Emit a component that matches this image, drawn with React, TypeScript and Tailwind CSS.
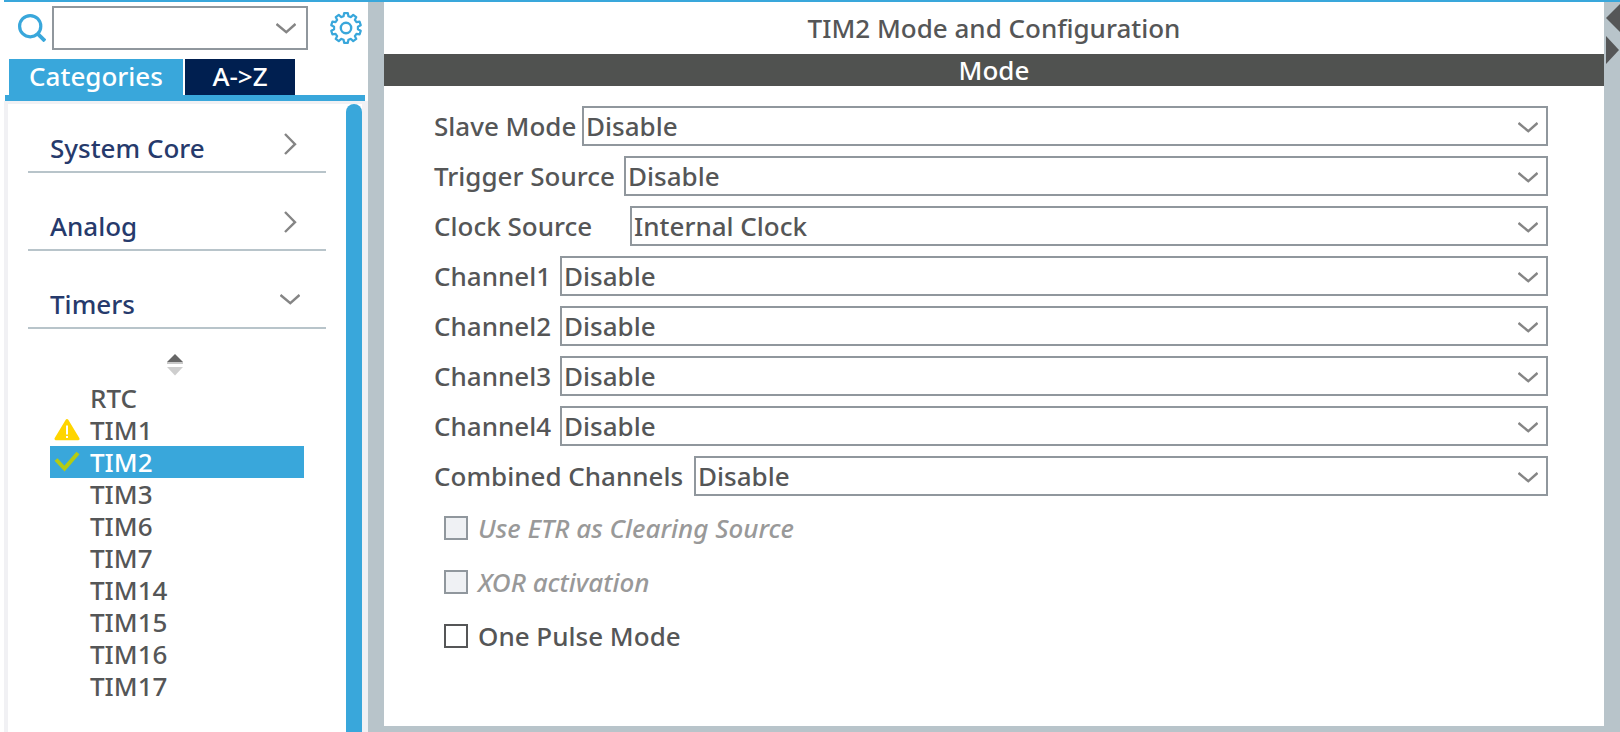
import { useState } from "react";

type ModeField = { id: string; label: string; value: string; labelWidth: string };

const MODE_FIELDS: ModeField[] = [
  { id: "slave-mode", label: "Slave Mode", value: "Disable", labelWidth: "w-[148px]" },
  { id: "trigger-source", label: "Trigger Source", value: "Disable", labelWidth: "w-[190px]" },
  { id: "clock-source", label: "Clock Source", value: "Internal Clock", labelWidth: "w-[196px]" },
  { id: "channel1", label: "Channel1", value: "Disable", labelWidth: "w-[126px]" },
  { id: "channel2", label: "Channel2", value: "Disable", labelWidth: "w-[126px]" },
  { id: "channel3", label: "Channel3", value: "Disable", labelWidth: "w-[126px]" },
  { id: "channel4", label: "Channel4", value: "Disable", labelWidth: "w-[126px]" },
  { id: "combined-channels", label: "Combined Channels", value: "Disable", labelWidth: "w-[260px]" },
];

const MODE_FLAGS = [
  { id: "etr", label: "Use ETR as Clearing Source", disabled: true },
  { id: "xor", label: "XOR activation", disabled: true },
  { id: "one-pulse", label: "One Pulse Mode", disabled: false },
];

const TIMERS = ["RTC", "TIM1", "TIM2", "TIM3", "TIM6", "TIM7", "TIM14", "TIM15", "TIM16", "TIM17"];

function ChevronDown({ className = "" }: { className?: string }) {
  return (
    <svg className={className} width="20" height="11" viewBox="0 0 20 11" fill="none" stroke="#858585" strokeWidth="2.4" aria-hidden="true">
      <path d="M0.5 1 L10.3 9.2 L19.5 1" />
    </svg>
  );
}

function ChevronRight({ className = "" }: { className?: string }) {
  return (
    <svg className={className} width="13" height="22" viewBox="0 0 13 22" fill="none" stroke="#858585" strokeWidth="2.4" aria-hidden="true">
      <path d="M1 1 L11 11.2 L1 21" />
    </svg>
  );
}

function SearchIcon() {
  return (
    <svg width="28" height="28" viewBox="0 0 28 28" fill="none" stroke="#39a7db" aria-hidden="true">
      <circle cx="12.2" cy="12.2" r="10.6" strokeWidth="3.2" />
      <path d="M19.5 19.7 L27 27" strokeWidth="3.8" />
    </svg>
  );
}

const GEAR_TEETH = 10;

const GEAR_OUTLINE =
  Array.from({ length: GEAR_TEETH }, (_, i) => {
    const step = (2 * Math.PI) / GEAR_TEETH;
    const corner = (radius: number, offset: number) => {
      const angle = (i + offset) * step - Math.PI / 2;
      return `${(16 + radius * Math.cos(angle)).toFixed(2)} ${(16 + radius * Math.sin(angle)).toFixed(2)}`;
    };
    return `${i === 0 ? "M" : "L"}${corner(12, -0.32)} L${corner(15, -0.2)} L${corner(15, 0.2)} L${corner(12, 0.32)}`;
  }).join(" ") + " Z";

function GearIcon() {
  return (
    <svg width="32" height="32" viewBox="0 0 32 32" fill="none" stroke="#39a7db" aria-hidden="true">
      <path d={GEAR_OUTLINE} strokeWidth="2.2" strokeLinejoin="round" />
      <circle cx="16" cy="16" r="5.2" strokeWidth="2.4" />
    </svg>
  );
}

function WarningIcon() {
  return (
    <svg width="26" height="24" viewBox="0 0 26 24" aria-hidden="true">
      <path d="M13 2.5 L24 20.8 H2 Z" fill="#ffd500" stroke="#ffd500" strokeWidth="3" strokeLinejoin="round" />
      <path d="M13 7.5 V16.5 M13 18 V20" stroke="#fff" strokeWidth="2" />
    </svg>
  );
}

function CheckIcon() {
  return (
    <svg width="26" height="24" viewBox="0 0 26 24" fill="none" aria-hidden="true">
      <path d="M2 9.5 L10.5 18.5 L24 3" stroke="#b4cb12" strokeWidth="4" />
    </svg>
  );
}

function Category({ name, open = false }: { name: string; open?: boolean }) {
  return (
    <button
      type="button"
      aria-expanded={open}
      className="mb-[30px] flex h-12 w-full items-end justify-between border-b-2 border-[#b8c4ca] pb-[5px] pl-[22px] text-left leading-9 text-[#263a6c]"
    >
      <span>{name}</span>
      <span className="mr-5 flex h-[41px] w-8 items-center justify-center pb-1">
        {open ? <ChevronDown /> : <ChevronRight />}
      </span>
    </button>
  );
}

function Sidebar() {
  const [selected, setSelected] = useState("TIM2");
  return (
    <aside className="flex w-[364px] shrink-0 flex-col">
      <div className="flex items-center pt-1 pl-[14px]">
        <SearchIcon />
        <div className="relative ml-[6px] w-64">
          <input aria-label="Search peripherals" className="block h-11 w-full border-2 border-[#90979d] bg-white pr-10 pl-1 outline-none" />
          <ChevronDown className="pointer-events-none absolute top-[17px] right-3" />
        </div>
        <button type="button" aria-label="Settings" className="ml-[22px]">
          <GearIcon />
        </button>
      </div>
      <div role="tablist" className="mt-[9px] flex gap-[2px] pl-[5px] leading-[34px] text-white">
        <button type="button" role="tab" aria-selected="true" className="h-9 w-[174px] bg-[#39a7db] pb-[2px]">
          Categories
        </button>
        <button type="button" role="tab" aria-selected="false" className="h-9 w-[110px] bg-[#001f50] pb-[2px]">
          A-&gt;Z
        </button>
      </div>
      <div className="mr-[3px] ml-px h-[6px] bg-[#39a7db]" />
      <div className="flex flex-1 border-t-[3px] border-r-[6px] border-l-4 border-[#f1f1f4]">
        <div className="flex-1 pt-[21px] pr-5 pl-5">
          <Category name="System Core" />
          <Category name="Analog" />
          <Category name="Timers" open />
          <div className="-mt-[5px] flex h-7 flex-col items-center pr-1">
            <button type="button" aria-label="Sort timers">
              <svg width="18" height="22" viewBox="0 0 18 22" aria-hidden="true">
                <path d="M9 0 L17 8 H1 Z" fill="#666" />
                <path d="M1 8 H17 V10 H1 Z" fill="#c8c8c8" />
                <path d="M1 13 H17 L9 21.5 Z" fill="#cecece" />
              </svg>
            </button>
          </div>
          <ul className="mr-[22px] ml-[22px]">
            {TIMERS.map((name) => (
              <li key={name}>
                <button
                  type="button"
                  onClick={() => setSelected(name)}
                  className={
                    name === selected
                      ? "flex h-8 w-full items-center bg-[#39a7db] pl-1 text-left leading-8 text-white"
                      : "flex h-8 w-full items-center pl-1 text-left leading-8"
                  }
                >
                  <span className="w-9">
                    {name === "TIM1" && <WarningIcon />}
                    {name === "TIM2" && <CheckIcon />}
                  </span>
                  {name}
                </button>
              </li>
            ))}
          </ul>
        </div>
        <div className="w-4 rounded-t-full bg-[#39a7db]" />
      </div>
    </aside>
  );
}

function ModePanel() {
  return (
    <main className="mb-[6px] min-w-0 flex-1 bg-white">
      <h1 className="h-[52px] text-center leading-[52px]">TIM2 Mode and Configuration</h1>
      <h2 className="h-8 bg-[#505250] text-center leading-8 text-white">Mode</h2>
      <form className="pt-5 pr-14 pl-[50px]">
        <div className="flex flex-col gap-[10px]">
          {MODE_FIELDS.map((field) => (
            <div key={field.id} className="flex h-10 items-center">
              <label htmlFor={field.id} className={`shrink-0 whitespace-nowrap ${field.labelWidth}`}>
                {field.label}
              </label>
              <div className="relative flex-1">
                <select
                  id={field.id}
                  defaultValue={field.value}
                  className="block h-10 w-full appearance-none border-2 border-[#90979d] bg-white pr-10 pl-[2px] leading-9 outline-none"
                >
                  <option>{field.value}</option>
                </select>
                <ChevronDown className="pointer-events-none absolute top-4 right-[10px]" />
              </div>
            </div>
          ))}
        </div>
        <div className="mt-3 flex flex-col gap-[14px] pl-[10px]">
          {MODE_FLAGS.map((flag) => (
            <div key={flag.id} className="flex h-10 items-center gap-[10px]">
              <input
                id={flag.id}
                type="checkbox"
                disabled={flag.disabled}
                className="size-6 appearance-none border-2 border-[#555657] bg-white checked:bg-[#39a7db] disabled:border-[#90979d] disabled:bg-[#eff1f4]"
              />
              <label htmlFor={flag.id} className={flag.disabled ? "text-[#999] italic" : ""}>
                {flag.label}
              </label>
            </div>
          ))}
        </div>
      </form>
    </main>
  );
}

export default function App() {
  return (
    <div className="flex min-h-screen bg-white pl-1 font-['Noto_Sans',sans-serif] text-[26px] leading-9 font-medium text-[#555657]">
      <div className="flex min-w-0 flex-1 border-t-2 border-[#39a7db]">
        <Sidebar />
        <div className="flex min-w-0 flex-1 bg-[#b8c4ca] pl-4">
          <ModePanel />
          <div className="flex w-4 flex-col gap-1 pt-[2px] pl-[2px]">
            <button type="button" aria-label="Previous panel">
              <svg width="14" height="28" viewBox="0 0 14 28" aria-hidden="true">
                <path d="M0 14 L14 0 V28 Z" fill="#555657" />
              </svg>
            </button>
            <button type="button" aria-label="Next panel">
              <svg width="14" height="28" viewBox="0 0 14 28" aria-hidden="true">
                <path d="M0 0 L13 14 L0 28 Z" fill="#555657" />
              </svg>
            </button>
          </div>
        </div>
      </div>
    </div>
  );
}
